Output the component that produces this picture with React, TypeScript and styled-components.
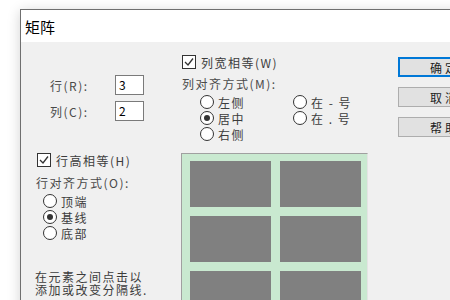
import styled, { createGlobalStyle } from "styled-components";

const GlobalStyle = createGlobalStyle`
  html, body {
    margin: 0;
    padding: 0;
    width: 450px;
    height: 300px;
    overflow: hidden;
    background: #ffffff;
  }
  body {
    font-family: "Noto Sans CJK SC", "Noto Sans", sans-serif;
  }
`;

const Window = styled.div`
  margin: 9px 0 0 20px;
  width: 520px;
  height: 330px;
  border: 1px solid #6f6f6f;
  background: #f0f0f0;
  box-shadow: 0 2px 12px rgba(0, 0, 0, 0.18);
`;

const TitleBar = styled.div`
  height: 32px;
  line-height: 34px;
  padding-left: 4px;
  background: #ffffff;
  font-size: 15px;
  color: #000;
  overflow: hidden;
`;

const DialogBody = styled.div`
  display: flex;
  font-size: 12px;
  letter-spacing: 1.5px;
  color: #3c3c3c;
`;

const LeftColumn = styled.div`
  width: 160px;
  padding-top: 33px;
  display: flex;
  flex-direction: column;
`;

const MiddleColumn = styled.div`
  width: 217px;
  padding-top: 13px;
  display: flex;
  flex-direction: column;
`;

const ButtonColumn = styled.div`
  padding-top: 15px;
  display: flex;
  flex-direction: column;
  gap: 10px;
`;

const FieldList = styled.div`
  display: flex;
  flex-direction: column;
  gap: 6px;
`;

const FieldRow = styled.div`
  display: flex;
  align-items: center;
  height: 20px;
`;

const FieldLabel = styled.span`
  width: 65px;
  padding-left: 29px;
  color: #4a4a4a;
`;

const NumberBox = styled.div`
  box-sizing: border-box;
  width: 29px;
  height: 20px;
  border: 1px solid #7a7a7a;
  background: #fff;
  padding-left: 3px;
  line-height: 18px;
  color: #000;
`;

const CheckRow = styled.div<{ $indent: number; $top: number }>`
  display: flex;
  align-items: center;
  height: 14px;
  margin-left: ${(p) => p.$indent}px;
  margin-top: ${(p) => p.$top}px;
`;

const CheckBox = styled.span`
  box-sizing: border-box;
  width: 14px;
  height: 14px;
  border: 1px solid #333;
  background: #fff;
  margin-right: 5px;
  display: flex;
  align-items: center;
  justify-content: center;
`;

const GroupLabel = styled.div<{ $indent: number; $top: number }>`
  line-height: 16px;
  margin-left: ${(p) => p.$indent}px;
  margin-top: ${(p) => p.$top}px;
  color: #4a4a4a;
`;

const RadioGrid = styled.div<{ $indent: number; $cols: string }>`
  display: grid;
  grid-template-columns: ${(p) => p.$cols};
  grid-auto-flow: column;
  grid-template-rows: repeat(3, 16px);
  margin-top: 2px;
  margin-left: ${(p) => p.$indent}px;
`;

const RadioRow = styled.div`
  display: flex;
  align-items: center;
  height: 16px;
  white-space: pre;
`;

const RadioCircle = styled.span<{ $checked?: boolean }>`
  box-sizing: border-box;
  width: 14px;
  height: 14px;
  border: 1px solid #333;
  border-radius: 50%;
  background: #fff;
  margin-right: 4px;
  display: flex;
  align-items: center;
  justify-content: center;
  &::after {
    content: "";
    width: 6px;
    height: 6px;
    border-radius: 50%;
    background: ${(p) => (p.$checked ? "#333" : "transparent")};
  }
`;

const Hint = styled.div`
  margin-top: 29px;
  margin-left: 14px;
  line-height: 13px;
  color: #3c3c3c;
`;

const Preview = styled.div`
  box-sizing: border-box;
  margin-top: 11px;
  width: 187px;
  border-top: 1px solid #a0a0a0;
  border-left: 1px solid #a0a0a0;
  border-right: 1px solid #e4e4e4;
  background: #c9e9d0;
  padding: 7px 5px 0 8px;
  display: grid;
  grid-template-columns: 81px 81px;
  grid-auto-rows: 46px;
  gap: 9px;
`;

const Cell = styled.div`
  background: #808080;
`;

const DialogButton = styled.div<{ $default?: boolean }>`
  box-sizing: border-box;
  width: 94px;
  height: 20px;
  background: #e1e1e1;
  border: ${(p) => (p.$default ? "2px solid #0078d7" : "1px solid #adadad")};
  display: flex;
  align-items: center;
  justify-content: center;
  color: #222;
  letter-spacing: 3px;
`;

function Check() {
  return (
    <CheckBox>
      <svg width="10" height="10" viewBox="0 0 10 10">
        <path d="M1 5 L4 8 L9 1.5" fill="none" stroke="#333" strokeWidth="1.3" />
      </svg>
    </CheckBox>
  );
}

function Radio({ label, checked }: { label: string; checked?: boolean }) {
  return (
    <RadioRow>
      <RadioCircle $checked={checked} />
      {label}
    </RadioRow>
  );
}

export default function App() {
  return (
    <>
      <GlobalStyle />
      <Window>
        <TitleBar>矩阵</TitleBar>
        <DialogBody>
          <LeftColumn>
            <FieldList>
              <FieldRow>
                <FieldLabel>行(R):</FieldLabel>
                <NumberBox>3</NumberBox>
              </FieldRow>
              <FieldRow>
                <FieldLabel>列(C):</FieldLabel>
                <NumberBox>2</NumberBox>
              </FieldRow>
            </FieldList>
            <CheckRow $indent={16} $top={32}>
              <Check />
              行高相等(H)
            </CheckRow>
            <GroupLabel $indent={15} $top={8}>
              行对齐方式(O):
            </GroupLabel>
            <RadioGrid $indent={22} $cols="auto">
              <Radio label="顶端" />
              <Radio label="基线" checked />
              <Radio label="底部" />
            </RadioGrid>
            <Hint>
              在元素之间点击以
              <br />
              添加或改变分隔线.
            </Hint>
          </LeftColumn>
          <MiddleColumn>
            <CheckRow $indent={1} $top={0}>
              <Check />
              列宽相等(W)
            </CheckRow>
            <GroupLabel $indent={1} $top={7}>
              列对齐方式(M):
            </GroupLabel>
            <RadioGrid $indent={19} $cols="93px auto">
              <Radio label="左侧" />
              <Radio label="居中" checked />
              <Radio label="右侧" />
              <Radio label="在 - 号" />
              <Radio label="在 . 号" />
            </RadioGrid>
            <Preview>
              {Array.from({ length: 6 }).map((_, i) => (
                <Cell key={i} />
              ))}
            </Preview>
          </MiddleColumn>
          <ButtonColumn>
            <DialogButton $default>确定</DialogButton>
            <DialogButton>取消</DialogButton>
            <DialogButton>帮助</DialogButton>
          </ButtonColumn>
        </DialogBody>
      </Window>
    </>
  );
}
